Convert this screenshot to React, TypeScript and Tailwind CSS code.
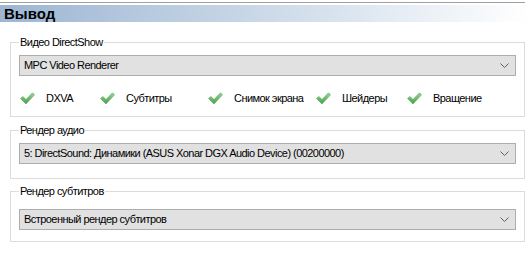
import React from "react";

const Check = () => (
  <svg width="15" height="13" viewBox="0 0 15 13" className="shrink-0">
    <defs>
      <linearGradient id="cg" x1="0" y1="0" x2="0" y2="1">
        <stop offset="0" stopColor="#9ad795" />
        <stop offset="1" stopColor="#44a04a" />
      </linearGradient>
    </defs>
    <path d="M0.5 6.5 L3 4.5 L6 7.5 L12.5 0.8 L14.5 2.8 L6 12 Z" fill="url(#cg)" stroke="#57a85b" strokeWidth="0.6" strokeLinejoin="round" />
  </svg>
);

const Chevron = () => (
  <svg width="9" height="5" viewBox="0 0 9 5">
    <path d="M0.5 0.5 L4.5 4.5 L8.5 0.5" fill="none" stroke="#606060" strokeWidth="1" />
  </svg>
);

const Select = ({ text }: { text: string }) => (
  <div className="h-[21px] w-[497px] border border-[#adadad] bg-[#e1e1e1] flex items-center justify-between pl-[4px] pr-[6px]">
    <span className="leading-none">{text}</span>
    <Chevron />
  </div>
);

const Item = ({ label, w }: { label: string; w: string }) => (
  <div className={`flex items-center gap-[11px] whitespace-nowrap ${w}`}>
    <Check />
    <span>{label}</span>
  </div>
);

export default function App() {
  return (
    <div
      className="w-[529px] h-[269px] bg-white text-[11px] tracking-[-0.55px] text-black overflow-hidden"
      style={{ fontFamily: '"Liberation Sans", Arial, sans-serif' }}
    >
      <div className="h-[2px]" />
      <div className="h-px w-[525px] bg-[#a0a0a0]" />
      <div className="h-[2px]" />
      <div className="h-[17px] bg-gradient-to-r from-[#9db6d3] via-[#cbd9e8] to-white flex items-center pl-[4px]">
        <span className="font-bold text-[15px] tracking-normal leading-none">Вывод</span>
      </div>

      <fieldset className="ml-[10px] mt-[13px] w-[515px] border border-[#dcdcdc] px-[8px] pb-[10px]">
        <legend className="px-[1px] leading-[14px]">Видео DirectShow</legend>
        <div className="mt-[6px]">
          <Select text="MPC Video Renderer" />
        </div>
        <div className="flex items-center mt-[14px] pl-[1px] h-[16px]">
          <Item label="DXVA" w="w-[80px]" />
          <Item label="Субтитры" w="w-[108px]" />
          <Item label="Снимок экрана" w="w-[108px]" />
          <Item label="Шейдеры" w="w-[91px]" />
          <Item label="Вращение" w="w-[100px]" />
        </div>
      </fieldset>

      <fieldset className="ml-[10px] mt-[6px] w-[515px] border border-[#dcdcdc] px-[8px] pb-[14px]">
        <legend className="px-[1px] leading-[14px]">Рендер аудио</legend>
        <div className="mt-[6px]">
          <Select text="5: DirectSound: Динамики (ASUS Xonar DGX Audio Device) (00200000)" />
        </div>
      </fieldset>

      <fieldset className="ml-[10px] mt-[5px] w-[515px] border border-[#dcdcdc] px-[8px] pb-[11px]">
        <legend className="px-[1px] leading-[14px]">Рендер субтитров</legend>
        <div className="mt-[11px]">
          <Select text="Встроенный рендер субтитров" />
        </div>
      </fieldset>
    </div>
  );
}
